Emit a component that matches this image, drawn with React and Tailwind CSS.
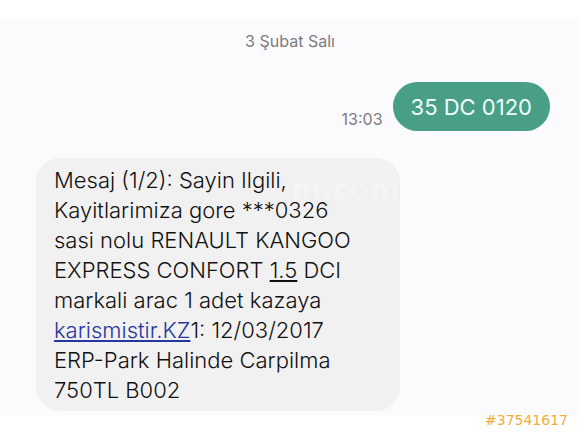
function DateLabel({ children }) {
  return <p className="text-center text-base leading-5 text-[#7b7b7e]">{children}</p>;
}

function SentMessage({ time, children }) {
  return (
    <div className="flex items-end justify-end gap-2.5">
      <time className="text-base leading-6 text-[#7b7b7e]">{time}</time>
      <p className="rounded-full bg-[#489f86] px-[18px] pt-[10px] pb-[9px] text-[22px] leading-[30px] text-[#effffa]">
        {children}
      </p>
    </div>
  );
}

function ReceivedMessage({ children }) {
  return (
    <div className="relative mr-auto w-[364px] max-w-full rounded-[24px] bg-[#f1f1f1] pt-[7px] pb-[6px] pl-[18px] text-[22px] leading-[30px] font-light text-[#111111]">
      <span
        aria-hidden="true"
        className="absolute top-4 right-0 font-['DejaVu_Sans','Verdana',sans-serif] text-[29px] font-bold text-[#f4f4f4]"
      >
        m.com
      </span>
      <div className="relative">{children}</div>
    </div>
  );
}

export default function App() {
  return (
    <div className="bg-white pt-[18px] font-['Inter',sans-serif]">
      <main className="bg-[#fbfbfe] pt-[13px] pr-[30px] pb-[5px] pl-9">
        <div className="-mr-[30px] -ml-9">
          <DateLabel>3 Şubat Salı</DateLabel>
        </div>
        <div className="mt-[31px]">
          <SentMessage time="13:03">35 DC 0120</SentMessage>
        </div>
        <div className="mt-[27px]">
          <ReceivedMessage>
            <p>
              Mesaj (1/2): Sayin Ilgili,
              <br />
              Kayitlarimiza gore ***0326
              <br />
              sasi nolu RENAULT KANGOO
              <br />
              EXPRESS CONFORT{" "}
              <span className="underline decoration-2 underline-offset-2">1.5</span> DCI
              <br />
              markali arac 1 adet kazaya
              <br />
              <a href="#karismistir" className="text-[#2636a0] underline decoration-2 underline-offset-2">
                karismistir.KZ
              </a>
              1: 12/03/2017
              <br />
              ERP-Park Halinde Carpilma
              <br />
              750TL B002
            </p>
          </ReceivedMessage>
        </div>
      </main>
      <footer className="-mt-1.5 pr-3 text-right font-['DejaVu_Sans',sans-serif] text-sm leading-5 text-[#f0ad3a]">
        #37541617
      </footer>
    </div>
  );
}
